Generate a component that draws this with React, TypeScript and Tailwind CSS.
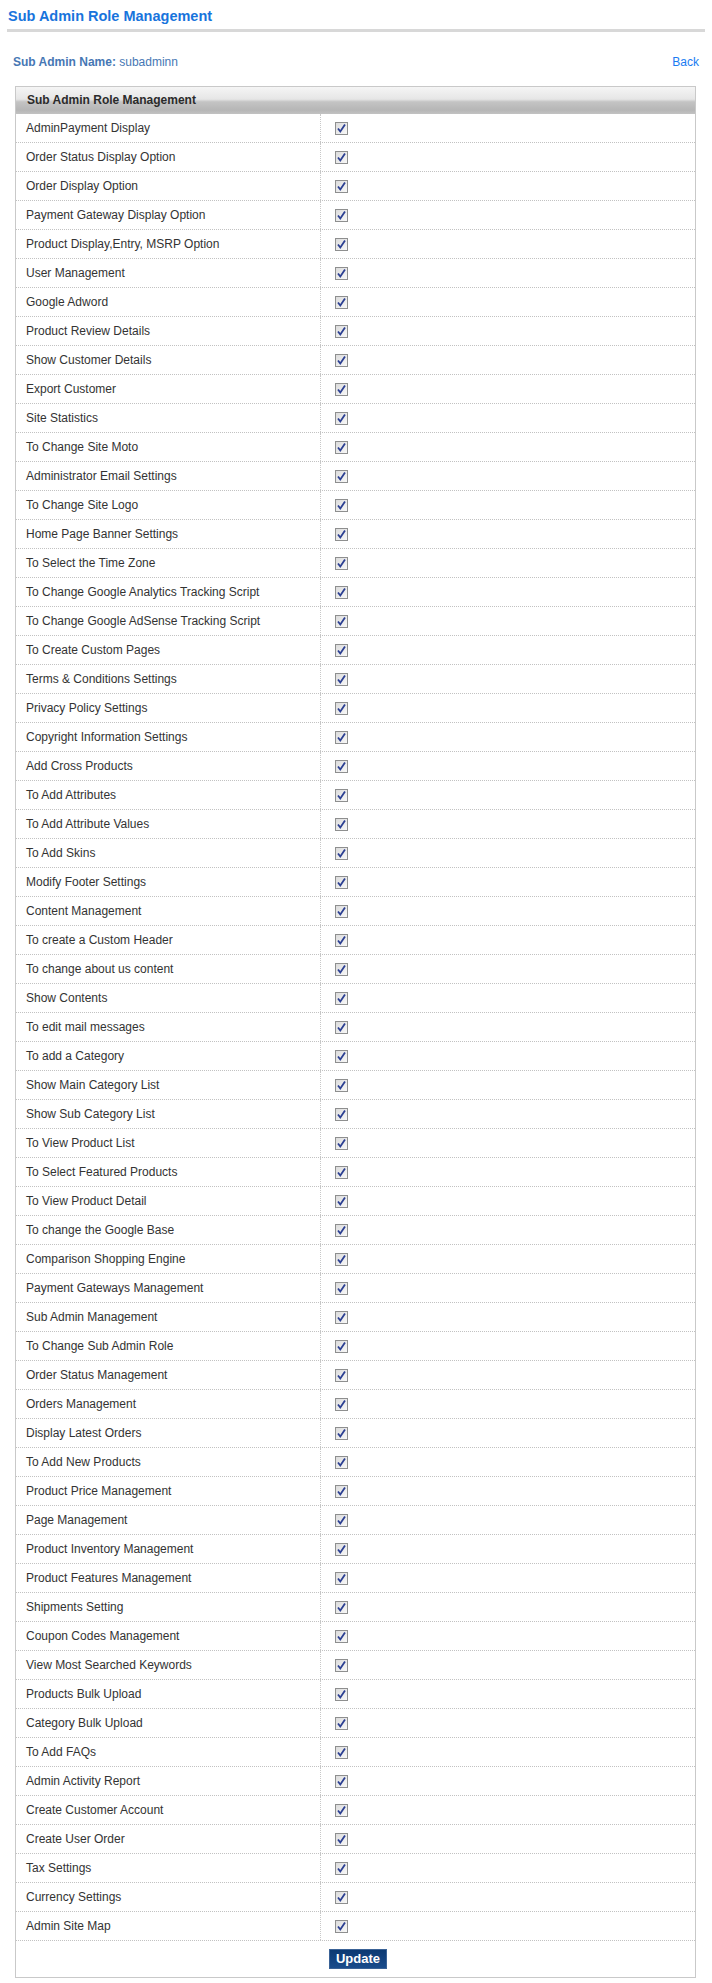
const permissions = [
  "AdminPayment Display",
  "Order Status Display Option",
  "Order Display Option",
  "Payment Gateway Display Option",
  "Product Display,Entry, MSRP Option",
  "User Management",
  "Google Adword",
  "Product Review Details",
  "Show Customer Details",
  "Export Customer",
  "Site Statistics",
  "To Change Site Moto",
  "Administrator Email Settings",
  "To Change Site Logo",
  "Home Page Banner Settings",
  "To Select the Time Zone",
  "To Change Google Analytics Tracking Script",
  "To Change Google AdSense Tracking Script",
  "To Create Custom Pages",
  "Terms & Conditions Settings",
  "Privacy Policy Settings",
  "Copyright Information Settings",
  "Add Cross Products",
  "To Add Attributes",
  "To Add Attribute Values",
  "To Add Skins",
  "Modify Footer Settings",
  "Content Management",
  "To create a Custom Header",
  "To change about us content",
  "Show Contents",
  "To edit mail messages",
  "To add a Category",
  "Show Main Category List",
  "Show Sub Category List",
  "To View Product List",
  "To Select Featured Products",
  "To View Product Detail",
  "To change the Google Base",
  "Comparison Shopping Engine",
  "Payment Gateways Management",
  "Sub Admin Management",
  "To Change Sub Admin Role",
  "Order Status Management",
  "Orders Management",
  "Display Latest Orders",
  "To Add New Products",
  "Product Price Management",
  "Page Management",
  "Product Inventory Management",
  "Product Features Management",
  "Shipments Setting",
  "Coupon Codes Management",
  "View Most Searched Keywords",
  "Products Bulk Upload",
  "Category Bulk Upload",
  "To Add FAQs",
  "Admin Activity Report",
  "Create Customer Account",
  "Create User Order",
  "Tax Settings",
  "Currency Settings",
  "Admin Site Map",
];

function CheckBox() {
  return (
    <span className="flex h-[13px] w-[13px] items-center justify-center border border-[#8e8f8f] bg-gradient-to-br from-[#dcdcdc] to-[#f8f8f8]">
      <svg width="11" height="11" viewBox="0 0 11 11">
        <path d="M2 5.5 L4.3 8.5 L9 1.5" fill="none" stroke="#2b3f92" strokeWidth="1.8" />
      </svg>
    </span>
  );
}

export default function App() {
  return (
    <div className="min-h-[1983px] w-[712px] bg-white font-['Liberation_Sans',Arial,sans-serif]">
      <div className="mx-[7px] border-b-[3px] border-[#d8d8d8] pl-px pt-[8px] pb-[4px]">
        <h1 className="text-[14.5px] leading-[17px] font-bold text-[#1874dc]">Sub Admin Role Management</h1>
      </div>

      <div className="flex items-center justify-between pt-[22px] pr-[13px] pl-[13px] text-[12px] leading-[16px]">
        <div className="text-[#4677b4]">
          <span className="font-bold">Sub Admin Name:</span> subadminn
        </div>
        <a className="text-[#1a7cf2]">Back</a>
      </div>

      <div className="mx-[15px] mt-[16px] w-[681px] border border-[#c9c9c9]">
        <div className="h-[27px] bg-[linear-gradient(#f5f5f5,#e6e6e6_45%,#c4c4c4_55%,#b6b6b6_85%,#c2c2c2)] pl-[11px] text-[12px] leading-[27px] font-bold text-[#2b2b2b]">
          Sub Admin Role Management
        </div>
        {permissions.map((p) => (
          <div key={p} className="grid h-[29px] grid-cols-[305px_1fr] border-b border-dotted border-[#c2c2c2]">
            <div className="flex items-center border-r border-dotted border-[#c8c8c8] pl-[10px] text-[12px] text-[#333333]">
              {p}
            </div>
            <div className="flex items-center pl-[14px]">
              <CheckBox />
            </div>
          </div>
        ))}
        <div className="flex justify-center pt-[8px] pb-[8px]">
          <button className="ml-[5px] h-[20px] w-[58px] border border-[#3a6296] bg-gradient-to-b from-[#0c3972] to-[#1a4c8c] text-[13px] leading-[18px] font-bold text-white">
            Update
          </button>
        </div>
      </div>
    </div>
  );
}
